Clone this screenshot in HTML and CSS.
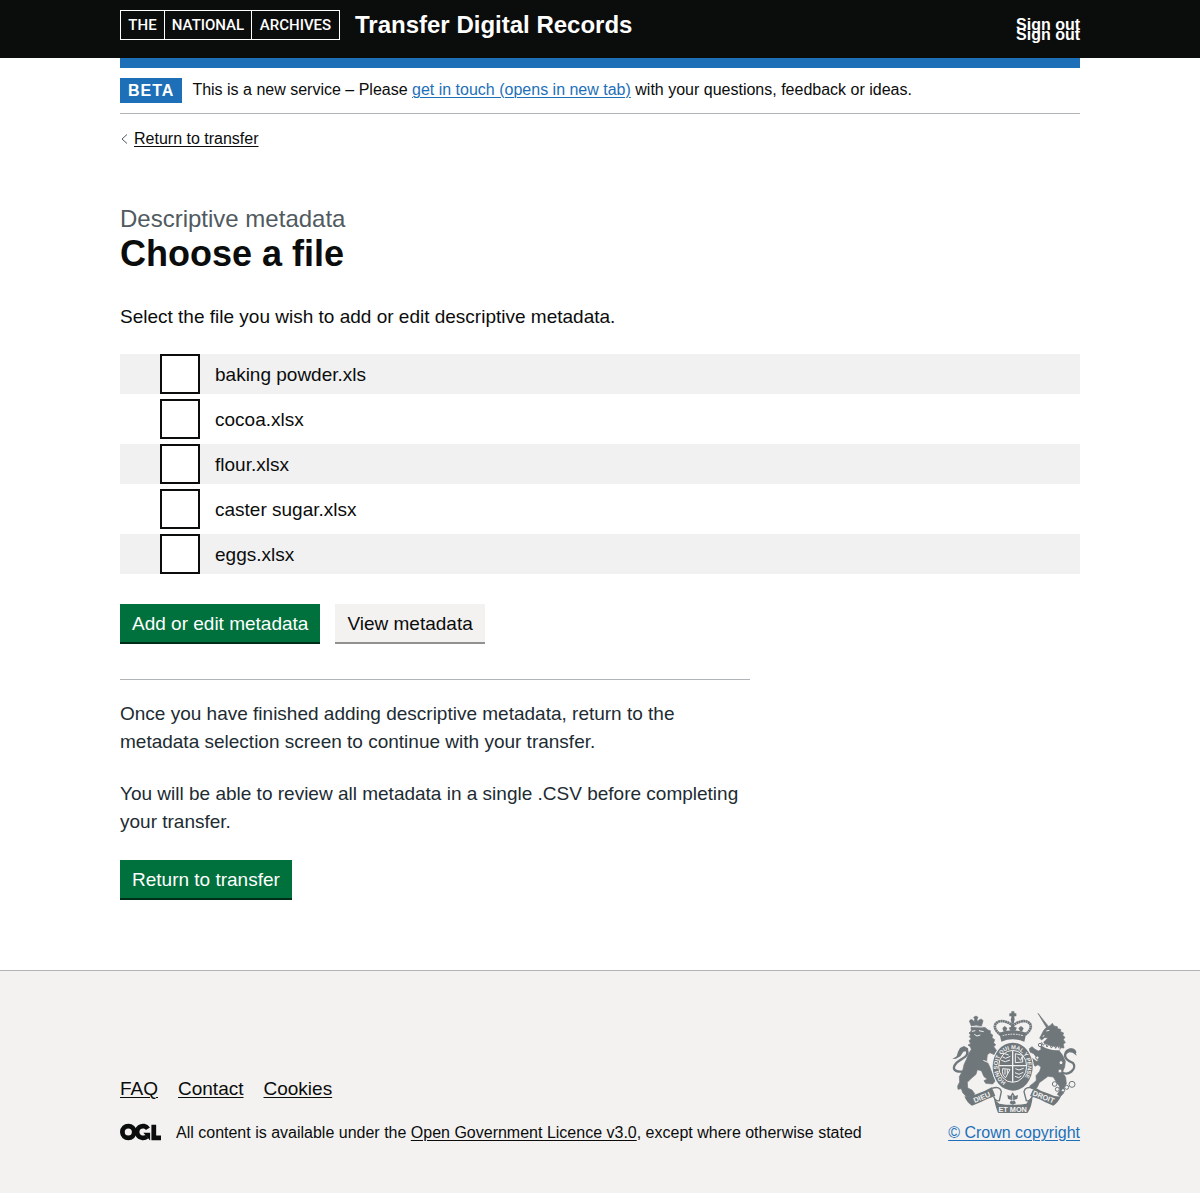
FILE: index.html
```html
<!DOCTYPE html>
<html lang="en">
<head>
  <meta charset="utf-8">
  <meta name="viewport" content="width=device-width, initial-scale=1">
  <title>Choose a file – Transfer Digital Records</title>
  <link rel="stylesheet" href="styles.css">
</head>
<body>
  <header class="header">
    <div class="container header-inner">
      <a class="brand" href="#"><span class="brand-word">THE</span><span class="brand-word">NATIONAL</span><span class="brand-word">ARCHIVES</span></a>
      <a class="service-name" href="#">Transfer Digital Records</a>
      <nav class="account">
        <a href="#">Sign out</a>
        <a href="#">Sign out</a>
      </nav>
    </div>
  </header>

  <div class="container">
    <div class="phase-banner">
      <strong class="phase-tag">BETA</strong>
      <span>This is a new service – Please <a class="link" href="#">get in touch (opens in new tab)</a> with your questions, feedback or ideas.</span>
    </div>
    <a class="back-link" href="#">
      <svg class="back-icon" viewBox="0 0 9 12" aria-hidden="true"><path d="M7 1.500L2 6l5 4.500"/></svg><span class="back-text">Return to transfer</span>
    </a>

    <main class="main">
      <form>
        <span class="caption">Descriptive metadata</span>
        <h1 class="heading">Choose a file</h1>
        <fieldset class="files">
          <legend class="legend">Select the file you wish to add or edit descriptive metadata.</legend>
          <ul class="file-list">
            <li class="file"><input class="checkbox" type="checkbox" id="file-1"><label for="file-1">baking powder.xls</label></li>
            <li class="file"><input class="checkbox" type="checkbox" id="file-2"><label for="file-2">cocoa.xlsx</label></li>
            <li class="file"><input class="checkbox" type="checkbox" id="file-3"><label for="file-3">flour.xlsx</label></li>
            <li class="file"><input class="checkbox" type="checkbox" id="file-4"><label for="file-4">caster sugar.xlsx</label></li>
            <li class="file"><input class="checkbox" type="checkbox" id="file-5"><label for="file-5">eggs.xlsx</label></li>
          </ul>
        </fieldset>
        <div class="button-group">
          <button class="button" type="button">Add or edit metadata</button>
          <button class="button button-secondary" type="button">View metadata</button>
        </div>
      </form>
      <section class="finish">
        <p>Once you have finished adding descriptive metadata, return to the metadata selection screen to continue with your transfer.</p>
        <p>You will be able to review all metadata in a single .CSV before completing your transfer.</p>
        <button class="button" type="button">Return to transfer</button>
      </section>
    </main>
  </div>

  <footer class="footer">
    <div class="container footer-inner">
      <div class="footer-meta">
        <nav class="footer-links"><a href="#">FAQ</a><a href="#">Contact</a><a href="#">Cookies</a></nav>
        <div class="licence">
          <svg class="ogl" viewBox="0 0 483 196" role="img" aria-label="OGL">
            <g fill="none" stroke="currentColor" stroke-width="56">
              <circle cx="98" cy="98" r="70"/>
              <path d="M329 59A70 70 0 1 0 317 150"/>
              <path d="M398 12V167H483"/>
            </g>
            <path fill="currentColor" d="M275 106H355V194H352Z"/>
          </svg>
          <span>All content is available under the <a href="#">Open Government Licence v3.0</a>, except where otherwise stated</span>
        </div>
      </div>
      <a class="crown" href="#">
        <svg class="crest" viewBox="36 32 375 306" aria-hidden="true">
          <defs>
            <path id="garter-arc" d="M200 246A45 52 0 1 1 236 246"/>
          </defs>
          <g fill="currentColor">
            <!-- royal crown -->
            <path d="M214 33h9v6h6v9h-6v8h-9v-8h-6v-9h6z"/>
            <circle cx="218" cy="58" r="6"/>
            <path d="M178 97Q218 83 259 97L253 124Q218 110 184 124Z"/>
            <path d="M191 94l-4-10 7-7 8 7-4 8zM246 94l5-10-8-7-8 7 5 8zM211 91l-5-9 8-3 4-10 5 10 8 3-5 9z"/>
          </g>
          <g fill="none" stroke="currentColor" stroke-width="8" stroke-dasharray="6 1">
            <path d="M182 103C149 80 168 56 197 64Q210 68 218 77"/>
            <path d="M255 103C288 80 269 56 240 64Q227 68 218 77M218 62V90"/>
          </g>
          <path d="M188 106Q218 97 249 106" class="crest-cut" stroke-width="3" stroke-dasharray="5 3"/>

          <!-- lion -->
          <g class="beast">
            <path d="M94 77L88 62Q92 54 99 60L103 65L104 56L101 51L108 47L114 51L111 57L113 64L118 58Q127 54 129 62L124 78L109 74Z"/>
            <path d="M93 81L110 78L136 82L144 89L151 91L151 99L158 104L156 112L164 118L161 127L167 134L161 139L168 148L177 157L172 167L160 162L150 157L142 163L140 181L148 197L154 213L162 225L165 243L158 251L137 249L132 241L142 236L132 229L124 211L112 208L108 222L94 234L82 246L83 263L96 269L104 280L99 289L79 289L68 277L64 265L54 267L53 257L59 245L58 229L68 211L72 193L79 178L86 160L94 147L91 139L84 134L92 130L87 121L94 116L88 109L92 104L87 98L94 92Z"/>
          </g>
          <path fill="none" stroke="currentColor" stroke-width="7" d="M72 213C42 218 34 204 50 187C69 171 88 169 80 149C74 141 64 143 62 154"/>
          <path fill="currentColor" d="M60 143l12-6 12 7 2 16-8-7-8 1-9 14-13 7-11 1 13-8 4-14z"/>
          <path class="crest-cut" stroke-width="3" d="M96 93l10-2M117 91l14 3M103 102l8 5 10-3M96 79l32 1M130 180l14 6"/>

          <!-- unicorn -->
          <g class="beast">
            <path d="M294 39L325 78L319 81Z"/>
            <path d="M318 82L330 76L337 69L342 77L352 79L353 85L362 87L362 94L371 98L368 105L375 111L370 118L376 126L370 132L372 143L362 142L358 152L368 165L376 183L374 200L367 216L377 231L379 250L373 262L371 278L361 289L352 282L359 271L358 257L350 247L340 230L324 228L308 240L298 247L291 262L276 266L269 257L281 248L289 240L288 226L299 213L303 200L294 193L285 198L279 188L270 185L268 177L277 174L289 183L296 180L288 169L281 160L270 155L268 145L276 139L285 147L295 152L303 148L302 135L309 127L317 120L324 112L313 112L305 119L299 113L304 104L310 92Z"/>
          </g>
          <path fill="none" stroke="currentColor" stroke-width="7" d="M366 215C383 230 413 205 399 188C383 181 370 173 377 157C385 144 404 144 406 158"/>
          <path fill="currentColor" d="M376 163q3-21 20-18l10 9 4 12-12-9-10-1z"/>
          <path class="crest-cut" stroke-width="11" d="M306 130Q330 147 359 144"/>
          <path fill="none" stroke="currentColor" stroke-width="3" d="M304 126l6 9 6-8 5 13 7-11 6 14 8-12 5 13 6-12 4 12"/>
          <path class="crest-cut" stroke-width="3" d="M319 92l9-2M308 108l5-2"/>
          <g class="chain">
            <circle cx="300" cy="134" r="5"/><circle cx="292" cy="172" r="5"/>
            <circle cx="363" cy="187" r="6"/><circle cx="360" cy="212" r="6"/>
            <circle cx="344" cy="251" r="7"/><circle cx="352" cy="267" r="6"/>
            <circle cx="369" cy="270" r="5"/><circle cx="380" cy="261" r="6"/>
            <circle cx="396" cy="252" r="9"/>
          </g>

          <!-- garter and shield -->
          <ellipse cx="218" cy="199" rx="63" ry="75" class="crest-halo"/>
          <ellipse cx="218" cy="199" rx="60" ry="72" fill="currentColor"/>
          <ellipse cx="218" cy="198" rx="42" ry="48" class="crest-cut" stroke-width="3"/>
          <text class="motto" font-size="17"><textPath href="#garter-arc" startOffset="2">HONI SOIT QUI MAL Y PENSE</textPath></text>
          <path class="crest-cut" stroke-width="4" d="M218 151V245M177 196H260"/>
          <path class="crest-cut" stroke-width="3" d="M187 169l10 5 14-6M184 180l12 4 14-5M194 160l12 4M226 160v27l22-2v-20zM232 169l10 11 4-11M188 205q-3 20 9 27l13-25zM195 207v16M202 207v13M226 205l11 4 14-5M225 217l12 5 13-6M225 228l11 4 8-5"/>

          <!-- ribbon -->
          <path fill="currentColor" d="M73 288Q81 308 96 316Q123 306 140 297L166 287Q161 274 155 261Q137 272 112 280Q92 290 73 288Z"/>
          <path fill="currentColor" d="M363 288Q354 308 340 316Q315 307 299 297L270 287Q275 273 284 261Q302 274 327 280Q344 290 363 288Z"/>
          <path fill="none" stroke="currentColor" stroke-width="4" d="M155 264Q181 256 184 274L178 301Q167 304 161 289M283 264Q255 256 252 274L259 301Q270 304 276 289"/>
          <path fill="currentColor" d="M161 288Q165 318 174 337Q218 345 263 337Q276 319 278 286L265 302L259 310Q218 317 178 310L169 303Z"/>
          <path fill="currentColor" d="M218 276l7 11 9-3-2 11-9 4 5 10-10 4-9-4 4-10-9-4-2-11 9 3z"/>
          <path class="crest-cut" stroke-width="2" d="M218 284v19M208 300h20"/>
          <g class="motto" font-size="22">
            <text transform="translate(104 308) rotate(-23)">DIEU</text>
            <text x="218" y="334" text-anchor="middle">ET MON</text>
            <text transform="translate(276 284) rotate(22)">DROIT</text>
          </g>
        </svg>
        <span>© Crown copyright</span>
      </a>
    </div>
  </footer>
</body>
</html>
```
FILE: styles.css
```css
* {
  box-sizing: border-box;
}

body {
  margin: 0;
  background: #fff;
  color: #0b0c0c;
  font-family: "Liberation Sans", Arial, sans-serif;
  font-size: 16px;
  line-height: 20px;
}

a {
  color: inherit;
  text-underline-offset: 2px;
  text-decoration-thickness: 1px;
}

.container {
  max-width: 960px;
  margin: 0 auto;
}

.header {
  background: #0b0c0c;
  color: #fff;
}

.header a {
  text-decoration: none;
}

.header-inner {
  display: flex;
  align-items: flex-start;
  gap: 15px;
  padding: 10px 0 18px;
}

.brand {
  display: grid;
  grid-template-columns: 43px 87px 88px;
  border: 1px solid #fff;
  height: 30px;
  width: 220px;
  font: 500 15px/28px Roboto, sans-serif;
}

.brand-word {
  display: flex;
  justify-content: center;
}

.brand-word + .brand-word {
  border-left: 1px solid #fff;
}

.service-name {
  font-size: 24px;
  font-weight: 700;
  line-height: 30px;
}

.account {
  display: flex;
  flex-direction: column;
  margin-left: auto;
  padding-top: 10px;
  font-weight: 700;
  line-height: 10px;
}

.phase-banner {
  display: flex;
  gap: 10px;
  padding: 10px 0;
  border-top: 10px solid #1d70b8;
  border-bottom: 1px solid #b1b4b6;
  line-height: 24px;
}

.phase-tag {
  padding: 0 8px;
  background: #1d70b8;
  color: #fff;
  letter-spacing: 1px;
  line-height: 25px;
}

.link {
  color: #1d70b8;
}

.back-link {
  display: inline-flex;
  align-items: center;
  gap: 5px;
  margin-top: 15px;
  text-decoration: none;
}

.back-icon {
  width: 9px;
  height: 12px;
  fill: none;
  stroke: #505a5f;
}

.back-text {
  text-decoration: underline;
}

.main {
  padding: 54px 0 70px;
  font-size: 19px;
  line-height: 25px;
}

.caption {
  display: block;
  color: #505a5f;
  font-size: 24px;
  line-height: 30px;
}

.heading {
  margin: 0 0 30px;
  font-size: 36px;
  line-height: 40px;
}

.files {
  margin: 0;
  padding: 0;
  border: 0;
}

.legend {
  padding: 0;
  margin-bottom: 25px;
}

.file-list {
  display: grid;
  gap: 5px;
  margin: 0 0 30px;
  padding: 0;
  list-style: none;
}

.file {
  display: flex;
  align-items: center;
  gap: 15px;
  padding-left: 40px;
}

.file:nth-child(odd) {
  background: #f1f1f1;
}

.checkbox {
  appearance: none;
  width: 40px;
  height: 40px;
  margin: 0;
  border: 2px solid #0b0c0c;
  background: #fff;
}

.checkbox:checked {
  box-shadow: inset 0 0 0 8px #fff;
  background: #0b0c0c;
}

.button-group {
  display: flex;
  gap: 15px;
  margin-bottom: 37px;
}

.button {
  margin: 0;
  padding: 2px 12px 0;
  border: 0;
  background: #00703c;
  box-shadow: 0 2px 0 #002d18;
  color: #fff;
  font: inherit;
  line-height: 36px;
}

.button-secondary {
  background: #f3f2f1;
  box-shadow: 0 2px 0 #929191;
  color: #0b0c0c;
}

.finish {
  max-width: 630px;
  padding: 20px 0 2px;
  border-top: 1px solid #b1b4b6;
  color: #212b32;
  line-height: 28px;
}

.finish p {
  margin: 0 0 24px;
}

.footer {
  padding: 40px 0 51px;
  border-top: 1px solid #b1b4b6;
  background: #f3f2f1;
}

.footer-inner {
  display: flex;
  align-items: flex-end;
  justify-content: space-between;
}

.footer-links {
  display: flex;
  gap: 20px;
  margin-bottom: 22px;
  font-size: 19px;
  line-height: 25px;
}

.licence {
  display: flex;
  align-items: flex-start;
  gap: 15px;
}

.ogl {
  width: 41px;
  height: 18px;
}

.crown {
  display: flex;
  flex-direction: column;
  align-items: center;
  gap: 10px;
  color: #1d70b8;
}

.crest {
  width: 125px;
  height: 102px;
  color: #6f777b;
}

.beast {
  fill: currentColor;
  stroke: currentColor;
  stroke-width: 2px;
}

.crest-cut {
  fill: none;
  stroke: #f3f2f1;
}

.crest-halo {
  fill: #f3f2f1;
}

.chain {
  fill: #f3f2f1;
  stroke: currentColor;
  stroke-width: 3px;
}

.motto {
  fill: #f3f2f1;
  font-family: "Liberation Sans", Arial, sans-serif;
  font-weight: 700;
}
```
